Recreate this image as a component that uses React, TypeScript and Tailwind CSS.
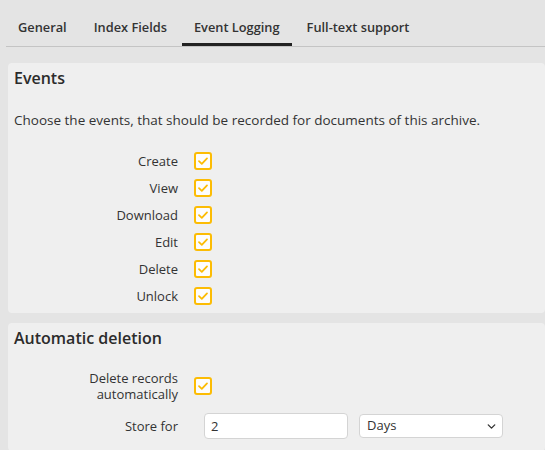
import { ChevronDown } from "lucide-react";

const tabs = ["General", "Index Fields", "Event Logging", "Full-text support"];
const events = ["Create", "View", "Download", "Edit", "Delete", "Unlock"];

function Check() {
  return (
    <div className="w-[18px] h-[18px] rounded-[3px] border-2 border-[#fcbc04] bg-[#fdfdfd] flex items-center justify-center">
      <svg width="12" height="10" viewBox="0 0 12 10" fill="none">
        <path
          d="M2 5.2L4.8 7.8L10 2.4"
          stroke="#fcbc04"
          strokeWidth="1.8"
          strokeLinecap="round"
          strokeLinejoin="round"
        />
      </svg>
    </div>
  );
}

export default function App() {
  return (
    <div
      className="min-h-screen bg-[#e4e4e4] pl-[6px] text-[13px] text-[#333]"
      style={{ fontFamily: '"Open Sans", "Liberation Sans", sans-serif' }}
    >
      {/* Tabs */}
      <div className="flex gap-[3px] border-b border-[#c4c4c4]">
        {tabs.map((t) => (
          <div
            key={t}
            className={`px-3 pt-[17px] pb-[6px] leading-[20px] text-[12.8px] font-semibold border-b-[3px] ${
              t === "Event Logging" ? "border-[#222]" : "border-transparent"
            }`}
          >
            {t}
          </div>
        ))}
      </div>

      {/* Events */}
      <section className="mt-[16px] ml-[2px] bg-[#efefef] rounded-[4px] pl-[6px] pt-[3px] pb-[4px]">
        <h2 className="text-[16px] leading-[24px] font-semibold text-[#2b2b2b]">Events</h2>
        <p className="mt-[20px] leading-[20px] text-[13.5px]">
          Choose the events, that should be recorded for documents of this archive.
        </p>
        <div className="mt-[17px] flex flex-col">
          {events.map((e) => (
            <div key={e} className="flex items-center h-[27px]">
              <div className="w-[164px] text-right leading-[20px]">{e}</div>
              <div className="ml-[16px]">
                <Check />
              </div>
            </div>
          ))}
        </div>
      </section>

      {/* Automatic deletion */}
      <section className="mt-[10px] ml-[2px] bg-[#efefef] rounded-[4px] pl-[6px] pt-[3px] pb-[12px]">
        <h2 className="text-[16px] leading-[24px] font-semibold text-[#2b2b2b]">
          Automatic deletion
        </h2>
        <div className="mt-[20px] flex items-center">
          <div className="w-[164px] text-right leading-[16px]">
            <div>Delete records</div>
            <div>automatically</div>
          </div>
          <div className="ml-[16px]">
            <Check />
          </div>
        </div>
        <div className="mt-[11px] flex items-center">
          <div className="w-[164px] text-right leading-[20px]">Store for</div>
          <input
            defaultValue="2"
            className="ml-[26px] w-[144px] h-[26px] bg-white border border-[#d4d4d4] rounded-[4px] px-[6px] text-[13px] text-[#333] outline-none"
          />
          <div className="relative ml-[11px]">
            <select
              defaultValue="Days"
              className="appearance-none w-[144px] h-[24px] bg-white border border-[#d4d4d4] rounded-[4px] pl-[7px] text-[13px] text-[#333] outline-none"
            >
              <option>Days</option>
              <option>Weeks</option>
              <option>Months</option>
              <option>Years</option>
            </select>
            <ChevronDown
              size={13}
              strokeWidth={2.5}
              className="absolute right-[5px] top-[6px] text-[#333] pointer-events-none"
            />
          </div>
        </div>
      </section>
    </div>
  );
}
